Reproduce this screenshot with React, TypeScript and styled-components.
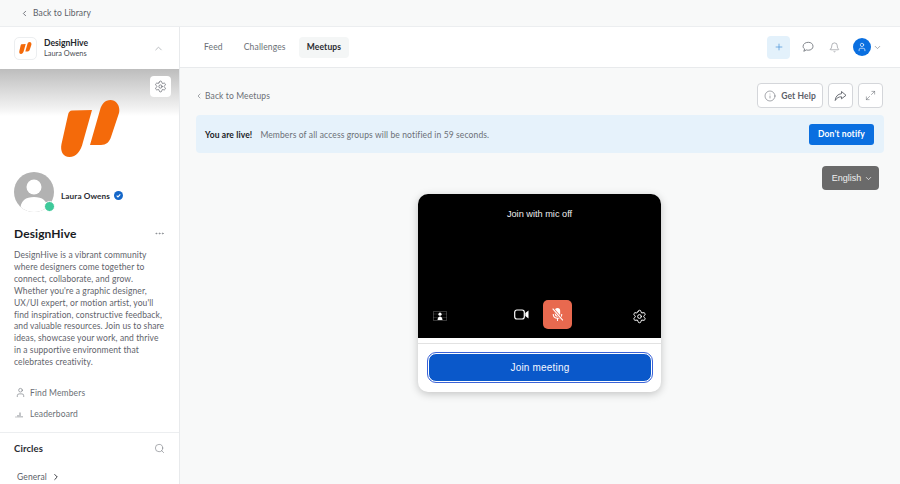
import React from "react";
import styled, { createGlobalStyle } from "styled-components";
import { ChevronLeft, ChevronRight, ChevronUp, ChevronDown, Settings, User, Search, Plus, Bell, Info, Maximize2, MoreHorizontal } from "lucide-react";

const Global = createGlobalStyle`
  html, body { margin: 0; padding: 0; }
  body { font-family: "Lato", "Open Sans", sans-serif; background: #f7f9f9; color: #191b1f; }
  * { box-sizing: border-box; }
`;
const Page = styled.div`width: 900px; height: 484px; overflow: hidden; display: flex; flex-direction: column; background: #f8f9f9;`;
const LibraryBar = styled.div`height: 27px; flex: none; display: flex; align-items: center; gap: 4px; padding: 0 0 0 20px; border-bottom: 1px solid #eceef0; font-size: 8.5px; letter-spacing: .12px; color: #5c6068; background: #f8f9f9;`;
const Body = styled.div`flex: 1; min-height: 0; display: flex;`;
const Sidebar = styled.aside`width: 180px; flex: none; background: #fff; border-right: 1px solid #e8eaec; overflow: hidden; display: flex; flex-direction: column;`;
const BrandHead = styled.div`height: 42px; flex: none; display: flex; align-items: center; padding: 0 15px 0 14px; gap: 7px;`;
const BrandIcon = styled.div`width: 23px; height: 23px; border: 1px solid #eceef0; border-radius: 5px; display: flex; align-items: center; justify-content: center;`;
const BrandText = styled.div`flex: 1; display: flex; flex-direction: column;`;
const BrandName = styled.div`font-size: 8.6px; font-weight: 700; line-height: 11px; color: #25272c;`;
const BrandUser = styled.div`font-size: 7.4px; line-height: 10px; color: #4a4d54;`;
const Cover = styled.div`height: 88px; flex: none; position: relative; display: flex; justify-content: center; align-items: flex-end; background: linear-gradient(#bdbdbd 0, #f3f3f3 40px, #fff 47px);`;
const CoverGear = styled.div`position: absolute; top: 7px; right: 8px; width: 21px; height: 21px; border-radius: 4px; background: #fff; display: flex; align-items: center; justify-content: center; color: #5c6068;`;
const Profile = styled.div`display: flex; align-items: center; gap: 7px; padding: 15px 0 0 14px;`;
const AvatarWrap = styled.div`position: relative; width: 40px; height: 40px;`;
const Dot = styled.span`position: absolute; right: 0; bottom: 1px; width: 9px; height: 9px; border-radius: 50%; background: #3ec99a; border: 1px solid #fff; box-sizing: content-box; margin: 0 -1px -1px 0;`;
const ProfileName = styled.div`font-size: 8.2px; font-weight: 700; letter-spacing: .1px; color: #2a2c31; display: flex; align-items: center; gap: 4px; padding-top: 7px;`;
const CommunityHead = styled.div`display: flex; align-items: center; justify-content: space-between; padding: 0 14px; margin-top: 12px; height: 18px;`;
const CommunityTitle = styled.h1`margin: 0; font-size: 12px; font-weight: 700; letter-spacing: .1px; color: #191b1f;`;
const Description = styled.p`margin: 8px 0 0; padding: 0 14px; font-size: 8.5px; line-height: 11.9px; letter-spacing: .1px; color: #5f636b; white-space: pre;`;
const LinkList = styled.div`display: flex; flex-direction: column; gap: 6px; padding: 16px 15px 0;`;
const SideLink = styled.div`height: 15.5px; display: flex; align-items: center; gap: 4px; font-size: 8.5px; letter-spacing: .12px; color: #6b6f76;`;
const CirclesHead = styled.div`margin-top: 10px; border-top: 1px solid #eceef0; padding: 0 14px; height: 32px; display: flex; align-items: center; justify-content: space-between; font-size: 9.5px; font-weight: 700; letter-spacing: .1px; color: #2a2c31;`;
const General = styled.div`display: flex; align-items: center; gap: 4px; padding: 8px 0 0 17px; font-size: 8.5px; letter-spacing: .12px; color: #5c6068;`;
const Main = styled.main`flex: 1; min-width: 0; display: flex; flex-direction: column;`;
const Nav = styled.nav`height: 41px; flex: none; background: #fff; border-bottom: 1px solid #e8eaec; display: flex; align-items: center; padding: 0 18px 0 16px;`;
const Tabs = styled.div`display: flex; align-items: center; gap: 5px; flex: 1;`;
const Tab = styled.div<{ $active?: boolean }>`height: 21px; padding: 0 8px; display: flex; align-items: center; border-radius: 4px; font-size: 8.5px; letter-spacing: .15px; background: ${p => p.$active ? "#f4f6f6" : "transparent"}; color: ${p => p.$active ? "#2a2c31" : "#6b6f76"}; font-weight: ${p => p.$active ? 700 : 400};`;
const NavIcons = styled.div`display: flex; align-items: center; gap: 0;`;
const PlusBtn = styled.div`width: 23px; height: 23px; border-radius: 4px; background: #e3f1fb; color: #3f8fd8; display: flex; align-items: center; justify-content: center; margin-right: 10px;`;
const NavIcon = styled.div`width: 16px; display: flex; justify-content: center; color: #74787f; margin-right: 10px;`;
const UserBtn = styled.div`width: 18px; height: 18px; border-radius: 50%; background: #0a6fe0; color: #fff; display: flex; align-items: center; justify-content: center; margin: 0 2px 0 1px;`;
const Content = styled.div`flex: 1; min-height: 0; padding: 15px 16px 0 16px; display: flex; flex-direction: column;`;
const ActionRow = styled.div`display: flex; align-items: center; justify-content: space-between; height: 25px;`;
const BackLink = styled.div`display: flex; align-items: center; gap: 2px; margin-left: -1px; font-size: 8.5px; letter-spacing: .12px; color: #6b6f76;`;
const Actions = styled.div`display: flex; gap: 5px; margin-right: 1px;`;
const OutlineBtn = styled.div<{ $w: number }>`width: ${p => p.$w}px; height: 25px; border: 1px solid #d4d6da; border-radius: 4px; background: #fff; display: flex; align-items: center; justify-content: center; gap: 5px; font-size: 8.5px; font-weight: 700; letter-spacing: .12px; color: #5c6068;`;
const Banner = styled.div`margin-top: 7px; height: 38px; background: #e6f2fb; border-radius: 4px; display: flex; align-items: center; padding: 1px 10px 0 9px; font-size: 8.5px; letter-spacing: .12px; color: #6b6f76;`;
const BannerStrong = styled.strong`color: #191b1f; margin-right: 8px;`;
const BannerText = styled.span`flex: 1;`;
const NotifyBtn = styled.div`width: 65px; height: 21px; margin-top: -1px; border-radius: 3px; background: #0a6fe0; color: #fff; font-weight: 700; display: flex; align-items: center; justify-content: center;`;
const LangRow = styled.div`display: flex; justify-content: flex-end; margin-top: 13px; padding-right: 5px;`;
const LangBtn = styled.div`width: 57px; height: 24px; border-radius: 4px; background: #6a6a6a; color: #f0f0f0; font-family: "Liberation Sans", sans-serif; font-size: 9px; display: flex; align-items: center; justify-content: center; gap: 3px; padding-left: 4px;`;
const Stage = styled.div`display: flex; justify-content: center; margin-top: 4px; padding-right: 1px;`;
const MeetCard = styled.div`width: 243px; height: 198px; background: #fff; border-radius: 10px; box-shadow: 0 2px 8px rgba(0,0,0,.22); overflow: hidden; font-family: "Liberation Sans", sans-serif;`;
const VideoPane = styled.div`height: 144px; background: #000; color: #fff; display: flex; flex-direction: column; justify-content: space-between; padding: 15px 0 9px;`;
const JoinLabel = styled.div`font-size: 9.2px; text-align: center; color: #eee;`;
const Controls = styled.div`display: flex; align-items: center; padding: 0 14px 0 15px;`;
const ControlLeft = styled.div`width: 44px; display: flex; align-items: center; padding-top: 3px;`;
const ControlRight = styled(ControlLeft)`justify-content: flex-end;`;
const ControlMid = styled.div`flex: 1; display: flex; align-items: center; justify-content: center; gap: 14px; padding-left: 6px;`;
const MicBtn = styled.div`width: 29px; height: 29px; border-radius: 5px; background: #e8694f; display: flex; align-items: center; justify-content: center; color: #fff;`;
const JoinArea = styled.div`margin-top: 5px; border-top: 1px solid #e2e2e2; padding: 9px 9px 0 10px;`;
const JoinBtn = styled.div`height: 29px; border-radius: 8px; background: #0a58ca; border: 1px solid #fff; outline: 1px solid #3a63d8; color: #f4f7ff; display: flex; align-items: center; justify-content: center; font-size: 10px; letter-spacing: .2px;`;

const Logo = ({ h }: { h: number }) => (
  <svg width={h * 60 / 57} height={h} viewBox="0 0 60 57" aria-hidden>
    <path d="M12 10.500L32 10L23 42C21 51 16 57 9.500 57C3 57 0 51 1.500 44L8 15C8.500 12 10 10.500 12 10.500Z" fill="#f46a0a" />
    <path d="M40 10C41.500 4 45 0 50.500 0C56.500 0 60.500 6 59 13L51 37C49.500 42 46 45 41 45L30 45Z" fill="#f46a0a" />
  </svg>
);

const Avatar = () => (
  <svg width="40" height="40" viewBox="0 0 40 40" aria-hidden>
    <defs><clipPath id="av"><circle cx="20" cy="20" r="20" /></clipPath></defs>
    <g clipPath="url(#av)">
      <rect width="40" height="40" fill="#b2b2b2" />
      <circle cx="20" cy="15" r="7.500" fill="#fff" />
      <path d="M6 40C6 28 12 25 20 25C28 25 34 28 34 40Z" fill="#fff" />
    </g>
  </svg>
);

const Verified = () => (
  <svg width="9" height="9" viewBox="0 0 10 10" aria-hidden>
    <circle cx="5" cy="5" r="5" fill="#1467c9" />
    <path d="M3 5.100L4.400 6.500L7 3.700" stroke="#fff" strokeWidth="1.2" fill="none" />
  </svg>
);

const Bars = () => (
  <svg width="11" height="9" viewBox="0 0 11 9" aria-hidden>
    <path d="M1 6.500V7.500M3 5V7.500M5 2.500V7.500M7 6V7.500" stroke="#6b6f76" strokeWidth=".8" />
  </svg>
);

const Portrait = () => (
  <svg width="14" height="10" viewBox="0 0 14 10" aria-hidden>
    <rect x=".5" y=".5" width="13" height="9" fill="none" stroke="#bbb" strokeWidth=".6" strokeDasharray="1 1" />
    <path d="M.5 3H13.500M.5 6.500H13.500" stroke="#888" strokeWidth=".5" strokeDasharray="1 1" />
    <circle cx="7" cy="3.200" r="1.600" fill="#fff" />
    <path d="M4.500 9C4.800 6.500 5.800 5.600 7 5.600C8.200 5.600 9.200 6.500 9.500 9Z" fill="#fff" />
  </svg>
);

const Bubble = () => (
  <svg width="12" height="12" viewBox="0 0 12 12" fill="none" stroke="currentColor" strokeWidth=".9" aria-hidden>
    <path d="M6.300 1.300C9 1.300 11 2.900 11 5.300C11 7.700 9 9.200 6.300 9.200C5.500 9.200 4.900 9.100 4.300 8.900L1.800 10.300L2.600 8C1.600 7.300 1.100 6.400 1.100 5.300C1.100 2.900 3.500 1.300 6.300 1.300Z" />
  </svg>
);

const ShareArrow = () => (
  <svg width="13" height="12" viewBox="0 0 13 12" fill="none" stroke="currentColor" strokeWidth=".9" strokeLinejoin="round" aria-hidden>
    <path d="M7.500 1.500L12 5.300L7.500 8.800V6.800C4.800 6.700 2.800 7.800 1.200 10.500C1.500 6.500 3.800 4 7.500 3.700Z" />
  </svg>
);

const Camera = () => (
  <svg width="15" height="11" viewBox="0 0 15 11" aria-hidden>
    <rect x=".7" y="1" width="9.600" height="9" rx="2.200" fill="none" stroke="#fff" strokeWidth="1.200" />
    <path d="M11.300 4L14.500 1.500V9.500L11.300 7Z" fill="#fff" />
  </svg>
);

const MutedMic = () => (
  <svg width="15" height="15" viewBox="0 0 14 14" aria-hidden>
    <rect x="4.500" y="1" width="5" height="8" rx="2.500" fill="#fff" />
    <path d="M3 6.500C3 9 4.800 10.500 7 10.500C9.200 10.500 11 9 11 6.500M7 10.500V13" fill="none" stroke="#fff" strokeWidth="1" />
    <path d="M2.500 1.500L12 12.500" stroke="#e8694f" strokeWidth="2.400" />
    <path d="M2.500 1.500L12 12.500" stroke="#fff" strokeWidth="1" />
  </svg>
);

const desc = `DesignHive is a vibrant community
where designers come together to
connect, collaborate, and grow.
Whether you're a graphic designer,
UX/UI expert, or motion artist, you'll
find inspiration, constructive feedback,
and valuable resources. Join us to share
ideas, showcase your work, and thrive
in a supportive environment that
celebrates creativity.`;

export default function App() {
  return (
    <Page>
      <Global />
      <LibraryBar><ChevronLeft size={9} strokeWidth={2.2} />Back to Library</LibraryBar>
      <Body>
        <Sidebar>
          <BrandHead>
            <BrandIcon><Logo h={12} /></BrandIcon>
            <BrandText><BrandName>DesignHive</BrandName><BrandUser>Laura Owens</BrandUser></BrandText>
            <ChevronUp size={11} color="#b5b8bc" />
          </BrandHead>
          <Cover>
            <CoverGear><Settings size={13} strokeWidth={1.3} /></CoverGear>
            <Logo h={57} />
          </Cover>
          <Profile>
            <AvatarWrap><Avatar /><Dot /></AvatarWrap>
            <ProfileName>Laura Owens <Verified /></ProfileName>
          </Profile>
          <CommunityHead><CommunityTitle>DesignHive</CommunityTitle><MoreHorizontal size={11} color="#8a8d93" /></CommunityHead>
          <Description>{desc}</Description>
          <LinkList>
            <SideLink><User size={11} strokeWidth={1.3} />Find Members</SideLink>
            <SideLink><Bars />Leaderboard</SideLink>
          </LinkList>
          <CirclesHead>Circles<Search size={11} strokeWidth={1.3} color="#74787f" /></CirclesHead>
          <General>General<ChevronRight size={10} strokeWidth={2.4} color="#3a3d43" /></General>
        </Sidebar>
        <Main>
          <Nav>
            <Tabs>
              <Tab>Feed</Tab><Tab>Challenges</Tab><Tab $active>Meetups</Tab>
            </Tabs>
            <NavIcons>
              <PlusBtn><Plus size={10} strokeWidth={1.6} /></PlusBtn>
              <NavIcon><Bubble /></NavIcon>
              <NavIcon><Bell size={11} strokeWidth={1.2} /></NavIcon>
              <UserBtn><User size={10} strokeWidth={1.6} /></UserBtn>
              <ChevronDown size={9} color="#8a8d93" />
            </NavIcons>
          </Nav>
          <Content>
            <ActionRow>
              <BackLink><ChevronLeft size={8} strokeWidth={1.8} />Back to Meetups</BackLink>
              <Actions>
                <OutlineBtn $w={66}><Info size={12} strokeWidth={1.1} />Get Help</OutlineBtn>
                <OutlineBtn $w={25}><ShareArrow /></OutlineBtn>
                <OutlineBtn $w={25}><Maximize2 size={11} strokeWidth={1.1} /></OutlineBtn>
              </Actions>
            </ActionRow>
            <Banner>
              <BannerStrong>You are live!</BannerStrong>
              <BannerText>Members of all access groups will be notified in 59 seconds.</BannerText>
              <NotifyBtn>Don't notify</NotifyBtn>
            </Banner>
            <LangRow><LangBtn>English <ChevronDown size={9} /></LangBtn></LangRow>
            <Stage>
              <MeetCard>
                <VideoPane>
                  <JoinLabel>Join with mic off</JoinLabel>
                  <Controls>
                    <ControlLeft><Portrait /></ControlLeft>
                    <ControlMid><Camera /><MicBtn><MutedMic /></MicBtn></ControlMid>
                    <ControlRight><Settings size={15} strokeWidth={1.6} /></ControlRight>
                  </Controls>
                </VideoPane>
                <JoinArea><JoinBtn>Join meeting</JoinBtn></JoinArea>
              </MeetCard>
            </Stage>
          </Content>
        </Main>
      </Body>
    </Page>
  );
}
